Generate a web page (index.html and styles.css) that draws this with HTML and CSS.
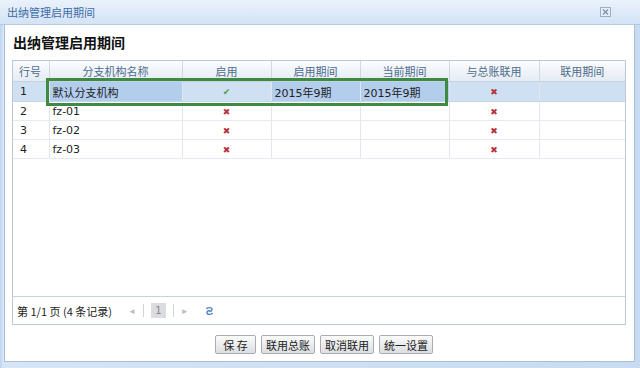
FILE: index.html
```html
<!DOCTYPE html>
<html lang="zh-CN">
<head>
    <meta charset="UTF-8">
    <meta name="viewport" content="width=device-width, initial-scale=1.0">
    <link rel="stylesheet" href="styles.css">
</head>
<body>
    <div class="window">
        <div class="titlebar">
            <span class="title">出纳管理启用期间</span>
            <svg class="close" width="11" height="10" viewBox="0 0 11 10">
                <rect x="0.5" y="0.5" width="10" height="9" fill="#e6eef8" stroke="#9bb0c8"/>
                <path d="M3 2.5 L8 7.5 M8 2.5 L3 7.5" stroke="#7f95b0" stroke-width="1.4"/>
            </svg>
        </div>
        <div class="panel">
            <h1 class="heading">出纳管理启用期间</h1>
            <div class="grid">
                <table class="grid-table">
                    <colgroup>
                        <col style="width:36px">
                        <col style="width:133px">
                        <col style="width:89px">
                        <col style="width:89px">
                        <col style="width:89px">
                        <col style="width:90px">
                        <col>
                    </colgroup>
                    <thead>
                        <tr>
                            <th class="num">行号</th>
                            <th>分支机构名称</th>
                            <th>启用</th>
                            <th>启用期间</th>
                            <th>当前期间</th>
                            <th>与总账联用</th>
                            <th>联用期间</th>
                        </tr>
                    </thead>
                    <tbody>
                        <tr class="selected">
                            <td class="num">1</td>
                            <td class="edit">默认分支机构</td>
                            <td class="mark"><span class="yes">✔</span></td>
                            <td class="edit">2015年9期</td>
                            <td class="edit">2015年9期</td>
                            <td class="mark"><span class="no">✖</span></td>
                            <td></td>
                        </tr>
                        <tr>
                            <td class="num">2</td>
                            <td>fz-01</td>
                            <td class="mark"><span class="no">✖</span></td>
                            <td></td>
                            <td></td>
                            <td class="mark"><span class="no">✖</span></td>
                            <td></td>
                        </tr>
                        <tr>
                            <td class="num">3</td>
                            <td>fz-02</td>
                            <td class="mark"><span class="no">✖</span></td>
                            <td></td>
                            <td></td>
                            <td class="mark"><span class="no">✖</span></td>
                            <td></td>
                        </tr>
                        <tr>
                            <td class="num">4</td>
                            <td>fz-03</td>
                            <td class="mark"><span class="no">✖</span></td>
                            <td></td>
                            <td></td>
                            <td class="mark"><span class="no">✖</span></td>
                            <td></td>
                        </tr>
                    </tbody>
                </table>
                <div class="grid-fill"></div>
                <div class="pager">
                    <span class="pager-info">第 1/1 页 (4 条记录)</span>
                    <span class="pager-arrow">◄</span>
                    <span class="pager-sep"></span>
                    <span class="pager-page">1</span>
                    <span class="pager-sep"></span>
                    <span class="pager-arrow">►</span>
                    <svg class="pager-refresh" width="9" height="10" viewBox="0 0 9 10">
                        <path d="M1.5 3.2 C2 1.2 6.5 1 7 3 C7.4 4.6 5.5 5.4 4.2 5.6" fill="none" stroke="#4f7fbf" stroke-width="1.4"/>
                        <path d="M7.5 6.8 C7 8.8 2.5 9 2 7 C1.6 5.4 3.5 4.6 4.8 4.4" fill="none" stroke="#4f7fbf" stroke-width="1.4"/>
                    </svg>
                </div>
                <div class="edit-frame"></div>
            </div>
            <div class="actions">
                <button class="btn">保 存</button>
                <button class="btn">联用总账</button>
                <button class="btn">取消联用</button>
                <button class="btn">统一设置</button>
            </div>
        </div>
    </div>
</body>
</html>
```

FILE: styles.css
```css
body {
    margin: 0;
    padding: 0;
    font-family: "DejaVu Sans", "Noto Sans CJK SC", sans-serif;
    font-size: 11px;
    color: #222;
    background-color: #c9dbf0;
}
.window {
    width: 640px;
    height: 368px;
    display: flex;
    flex-direction: column;
    background: linear-gradient(to right, #bcd3ee, #d6e5f6 3px, #c8dbf1);
    overflow: hidden;
}
.titlebar {
    height: 25px;
    flex-shrink: 0;
    display: flex;
    align-items: center;
    justify-content: space-between;
    padding: 0 29px 0 7px;
    background: linear-gradient(#eaf2fb, #d3e3f5);
    border-bottom: 1px solid #b4c9e2;
    box-sizing: border-box;
}
.title {
    font-size: 11px;
    color: #3d6ca6;
    font-family: "Noto Sans CJK SC", sans-serif;
}
.close {
    display: block;
}
.panel {
    flex: 1;
    margin: 0 5px 6px 4px;
    padding: 0 8px 0 7px;
    background-color: #fff;
    border: 1px solid #a9bfd9;
    border-top: none;
    display: flex;
    flex-direction: column;
}
.heading {
    margin: 0;
    height: 35px;
    line-height: 35px;
    font-size: 14px;
    font-weight: bold;
    color: #111;
    font-family: "Noto Sans CJK SC", sans-serif;
    padding-left: 1px;
}
.grid {
    position: relative;
    height: 265px;
    box-sizing: border-box;
    border: 1px solid #bcc8d6;
    display: flex;
    flex-direction: column;
}
.grid-table {
    width: 100%;
    table-layout: fixed;
    border-collapse: collapse;
}
.grid-table th {
    height: 20px;
    padding: 0;
    font-weight: normal;
    color: #4f6b8c;
    background: linear-gradient(#fbfcfe, #e4ebf4);
    border-right: 1px solid #cfd9e5;
    border-bottom: 1px solid #c6d2df;
    text-align: center;
}
.grid-table th.num {
    text-align: left;
    padding-left: 6px;
}
.grid-table td {
    height: 18px;
    padding: 0 0 0 3px;
    border-right: 1px solid #e2e7ee;
    border-bottom: 1px solid #e6eaf0;
    white-space: nowrap;
    overflow: hidden;
}
.grid-table th:last-child,
.grid-table td:last-child {
    border-right: none;
}
.grid-table td.num {
    padding-left: 7px;
}
.grid-table td.mark {
    text-align: center;
    padding: 0;
}
.grid-table tr.selected td {
    height: 19px;
    background-color: #cfe0f3;
    border-bottom-color: #c4d6ec;
}
.grid-table tr.selected td.edit {
    background-color: #b3cdec;
}
.yes {
    color: #4f9d3a;
    font-size: 9px;
}
.no {
    color: #b5323c;
    font-size: 9px;
}
.grid-fill {
    flex: 1;
    background-color: #fff;
}
.pager {
    height: 27px;
    border-top: 1px solid #c8d2de;
    display: flex;
    align-items: center;
    padding-left: 4px;
    font-family: "Noto Sans CJK SC", sans-serif;
}
.pager-info {
    margin-right: 16px;
}
.pager-arrow {
    color: #b8bec6;
    font-size: 8px;
}
.pager-sep {
    width: 1px;
    height: 13px;
    background-color: #d0d4da;
    margin: 0 7px;
}
.pager-page {
    width: 15px;
    height: 15px;
    line-height: 15px;
    text-align: center;
    background-color: #dadcdf;
    color: #888;
    font-family: "DejaVu Sans", sans-serif;
    font-size: 10px;
}
.pager-refresh {
    margin-left: 16px;
}
.edit-frame {
    position: absolute;
    left: 33px;
    top: 17px;
    width: 402px;
    height: 28px;
    box-sizing: border-box;
    border: 3px solid #3e8a43;
}
.actions {
    display: flex;
    justify-content: center;
    gap: 5px;
    padding: 10px 0 0 10px;
}
.btn {
    height: 19px;
    min-width: 41px;
    padding: 0 4px;
    box-sizing: border-box;
    border: 1px solid #a9adb3;
    border-radius: 2px;
    background: linear-gradient(#fbfbfb, #dcdee1);
    font-family: "Noto Sans CJK SC", sans-serif;
    font-size: 11px;
    line-height: 16px;
    color: #222;
}
```
